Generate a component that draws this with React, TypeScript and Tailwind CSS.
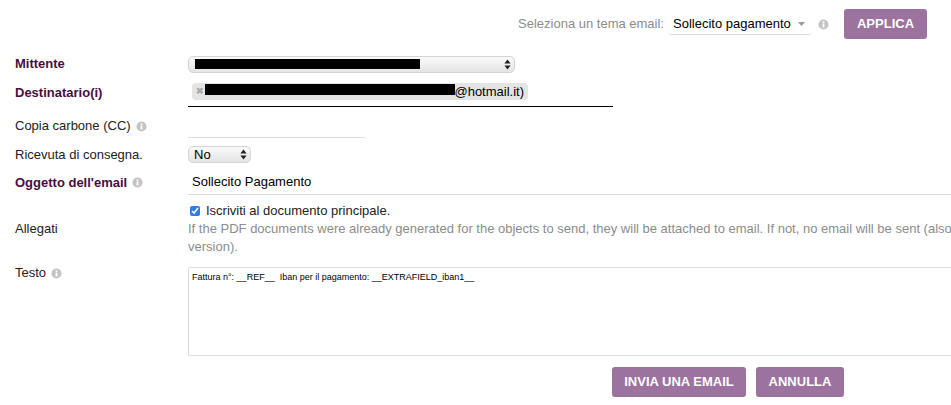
const Info = ({ className = "" }: { className?: string }) => (
  <svg viewBox="0 0 12 12" className={`inline-block w-[11px] h-[11px] ${className}`}>
    <circle cx="6" cy="6" r="5.5" fill="#c4c4c4" />
    <rect x="5" y="5" width="2" height="4.2" fill="#fff" />
    <rect x="5" y="2.6" width="2" height="1.6" fill="#fff" />
  </svg>
);

const Updown = () => (
  <svg viewBox="0 0 7 11" className="w-[7px] h-[11px]">
    <path d="M3.5 0.5 L6.6 4.5 H0.4 Z M3.5 10.5 L6.6 6.5 H0.4 Z" fill="#222" />
  </svg>
);

const Row = ({
  h,
  label,
  labelCls = "",
  bold,
  children,
}: {
  h: string;
  label: React.ReactNode;
  labelCls?: string;
  bold?: boolean;
  children?: React.ReactNode;
}) => (
  <div className={`flex items-center ${h}`}>
    <div className={`w-[188px] shrink-0 pl-[15px] flex items-center gap-[5px] ${labelCls} ${bold ? "font-bold text-[#4a0d3f]" : "text-[#222]"}`}>
      {label}
    </div>
    {children}
  </div>
);

const NativeBox = ({ cls, children }: { cls: string; children: React.ReactNode }) => (
  <div className={`relative flex items-center justify-between rounded-[5px] border border-[#d4d4d4] bg-gradient-to-b from-[#fafafa] to-[#e4e4e4] h-[17px] pl-[5px] pr-[3px] text-[13px] leading-none text-black ${cls}`}>
    {children}
  </div>
);

const Btn = ({ cls, children }: { cls: string; children: React.ReactNode }) => (
  <div className={`flex items-center justify-center h-[30px] rounded-[3px] bg-[#9c729f] text-white font-bold text-[13px] whitespace-nowrap ${cls}`}>
    {children}
  </div>
);

export default function App() {
  return (
    <div className="relative w-[951px] h-[405px] overflow-hidden bg-white text-[13px] leading-[18px] font-['Liberation_Sans',Arial,sans-serif]">
      <div className="flex items-center justify-end h-[30px] mt-[9px] mb-[17px] pr-[24px]">
        <span className="text-[#8c8c8c] mr-[4px] whitespace-nowrap">Seleziona un tema email:</span>
        <div className="flex items-center justify-between w-[144px] h-[22px] border-b border-[#ddd] rounded-[3px] pl-[5px] pr-[7px] text-black whitespace-nowrap">
          <span>Sollecito pagamento</span>
          <svg viewBox="0 0 7 4" className="w-[7px] h-[4px]">
            <path d="M0 0 H7 L3.5 4 Z" fill="#9a9a9a" />
          </svg>
        </div>
        <Info className="ml-[6px] mr-[15px]" />
        <Btn cls="w-[83px]">APPLICA</Btn>
      </div>

      <Row h="h-[17px]" label="Mittente" labelCls="pb-[2px]" bold>
        <NativeBox cls="w-[327px] !justify-end">
          <Updown />
          <span className="absolute left-[6px] top-[2px] w-[225px] h-[10px] bg-black" />
        </NativeBox>
      </Row>

      <Row h="h-[24px] mt-[10px]" label="Destinatario(i)" labelCls="pb-[4px]" bold>
        <div className="w-[425px] h-[24px] border-b border-black pl-[4px]">
          <div className="relative flex items-center justify-end w-[336px] h-[17px] rounded-[4px] bg-[#e4e4e4] pr-[4px] text-black">
            <span className="absolute left-[4px] top-0 text-[#aaa] text-[9px] font-bold leading-[17px]">✖</span>
            <span>@hotmail.it)</span>
            <span className="absolute left-[13px] top-[1px] w-[250px] h-[11px] bg-black" />
          </div>
        </div>
      </Row>

      <Row
        h="h-[31px]"
        labelCls="pt-[7px]"
        label={
          <>
            <span>Copia carbone (CC)</span>
            <Info />
          </>
        }
      >
        <div className="w-[177px] h-[31px] border-b border-[#ddd]" />
      </Row>

      <Row h="h-[17px] mt-[8px]" label="Ricevuta di consegna.">
        <NativeBox cls="w-[63px]">
          <span>No</span>
          <Updown />
        </NativeBox>
      </Row>

      <Row
        h="h-[32px]"
        bold
        labelCls="pt-[7px]"
        label={
          <>
            <span>Oggetto dell'email</span>
            <Info />
          </>
        }
      >
        <div className="flex-1 h-[32px] border-b border-[#ddd] pl-[4px] flex items-center pt-[6px] text-black">
          Sollecito Pagamento
        </div>
      </Row>

      <Row h="h-[54px] mt-[7px]" label="Allegati">
        <div className="whitespace-nowrap">
          <label className="flex items-center h-[18px] pl-[2px] text-[#222]">
            <input type="checkbox" readOnly checked className="w-[10px] h-[10px] mr-[6px] accent-[#2f7fe0]" />
            Iscriviti al documento principale.
          </label>
          <div className="text-[#8c8c8c]">
            If the PDF documents were already generated for the objects to send, they will be attached to email. If not, no email will be sent (also
            <br />
            version).
          </div>
        </div>
      </Row>

      <div className="flex items-start mt-[11px]">
        <div className="w-[188px] shrink-0 pl-[15px] flex items-center gap-[5px] text-[#222] mt-[-3px]">
          <span>Testo</span>
          <Info />
        </div>
        <div className="flex-1 h-[89px] border border-r-0 border-[#ddd] rounded-l-[2px] pl-[3px] pt-[3px] text-[9px] leading-[12px] text-black whitespace-pre">
          {"Fattura n°: __REF__  Iban per il pagamento: __EXTRAFIELD_iban1__"}
        </div>
      </div>

      <div className="flex justify-end gap-[10px] mt-[11px] pr-[107px]">
        <Btn cls="w-[134px]">INVIA UNA EMAIL</Btn>
        <Btn cls="w-[88px]">ANNULLA</Btn>
      </div>
    </div>
  );
}
